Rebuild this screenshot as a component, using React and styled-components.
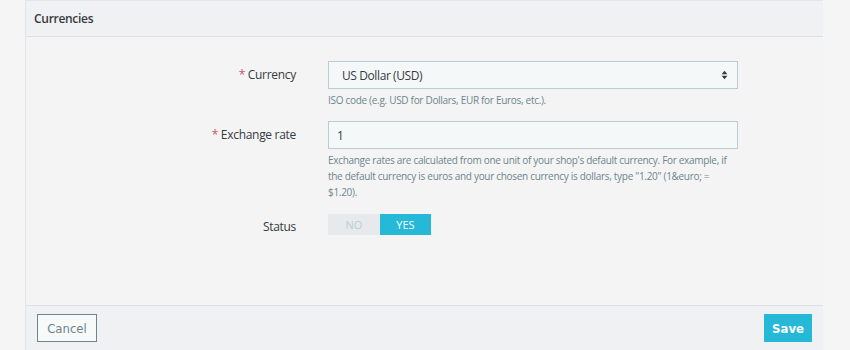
import React, { useState } from "react";
import styled, { createGlobalStyle } from "styled-components";

const GlobalStyle = createGlobalStyle`
    html, body {
        margin: 0;
        padding: 0;
        background: #f5f5f5;
        font-family: "Open Sans", "Liberation Sans", sans-serif;
        color: #363a41;
    }
    * {
        box-sizing: border-box;
    }
`;

function App() {
    const [currency, setCurrency] = useState("USD");
    const [rate, setRate] = useState("1");
    const [active, setActive] = useState(true);

    return (
        <>
            <GlobalStyle />
            <Page>
                <Panel>
                    <Header>Currencies</Header>
                    <Body>
                        <FormGroup>
                            <Label>
                                <Required>*</Required> Currency
                            </Label>
                            <Field>
                                <SelectBox>
                                    <Select
                                        value={currency}
                                        onChange={(e) => setCurrency(e.target.value)}
                                    >
                                        <option value="USD">US Dollar (USD)</option>
                                        <option value="EUR">Euro (EUR)</option>
                                    </Select>
                                    <Caret viewBox="0 0 8 12" aria-hidden="true">
                                        <path d="M4 1 L7.5 5 H0.5 Z" />
                                        <path d="M4 11 L7.5 7 H0.5 Z" />
                                    </Caret>
                                </SelectBox>
                                <Help>ISO code (e.g. USD for Dollars, EUR for Euros, etc.).</Help>
                            </Field>
                        </FormGroup>

                        <FormGroup>
                            <Label>
                                <Required>*</Required> Exchange rate
                            </Label>
                            <Field>
                                <Input
                                    type="text"
                                    value={rate}
                                    onChange={(e) => setRate(e.target.value)}
                                />
                                <Help>
                                    Exchange rates are calculated from one unit of your shop's
                                    default currency. For example, if the default currency is
                                    euros and your chosen currency is dollars, type "1.20"
                                    (1&amp;euro; = $1.20).
                                </Help>
                            </Field>
                        </FormGroup>

                        <FormGroup>
                            <Label>Status</Label>
                            <Field>
                                <Switch>
                                    <SwitchOption
                                        type="button"
                                        $on={!active}
                                        onClick={() => setActive(false)}
                                    >
                                        NO
                                    </SwitchOption>
                                    <SwitchOption
                                        type="button"
                                        $on={active}
                                        onClick={() => setActive(true)}
                                    >
                                        YES
                                    </SwitchOption>
                                </Switch>
                            </Field>
                        </FormGroup>
                    </Body>
                    <Footer>
                        <CancelButton type="button">Cancel</CancelButton>
                        <SaveButton type="button">Save</SaveButton>
                    </Footer>
                </Panel>
            </Page>
        </>
    );
}

const Page = styled.div`
    width: 850px;
    height: 350px;
    padding: 0 27px 0 25px;
    background: #f5f5f5;
    overflow: hidden;
`;
const Panel = styled.div`
    display: flex;
    flex-direction: column;
    height: 100%;
    background: #f4f4f4;
    border-left: 1px solid #e3e6e8;
    border-top: 1px solid #e3e6e8;
`;
const Header = styled.div`
    height: 36px;
    padding: 0 8px;
    display: flex;
    align-items: center;
    background: #eff1f2;
    border-bottom: 1px solid #dbe2e5;
    font-size: 12px;
    letter-spacing: -0.3px;
    font-weight: 600;
    color: #363a41;
`;
const Body = styled.div`
    flex: 1;
    padding-top: 24px;
`;
const FormGroup = styled.div`
    display: grid;
    grid-template-columns: 270px 410px;
    column-gap: 32px;
    margin-bottom: 13px;
`;
const Label = styled.label`
    text-align: right;
    font-size: 12px;
    letter-spacing: -0.3px;
    line-height: 28px;
    color: #363a41;
`;
const Required = styled.span`
    color: #c05c67;
`;
const Field = styled.div`
    display: flex;
    flex-direction: column;
    align-items: flex-start;
`;
const SelectBox = styled.div`
    position: relative;
    width: 100%;
`;
const Select = styled.select`
    width: 100%;
    height: 28px;
    padding: 0 30px 0 13px;
    font-family: inherit;
    font-size: 12px;
    letter-spacing: -0.4px;
    color: #363a41;
    background: #f5f8f9;
    border: 1px solid #bbcdd2;
    border-radius: 0;
    appearance: none;
    outline: none;
`;
const Caret = styled.svg`
    position: absolute;
    right: 10px;
    top: 9px;
    width: 7px;
    height: 10px;
    fill: #363a41;
    pointer-events: none;
`;
const Input = styled.input`
    width: 100%;
    height: 28px;
    padding: 0 8px;
    font-family: inherit;
    font-size: 12px;
    color: #363a41;
    background: #f5f8f9;
    border: 1px solid #bbcdd2;
    border-radius: 0;
    outline: none;
`;
const Help = styled.p`
    margin: 3px 0 0;
    font-size: 10px;
    letter-spacing: -0.3px;
    line-height: 16px;
    color: #6c868e;
`;
const Switch = styled.div`
    display: flex;
    height: 21px;
    margin-top: 1px;
`;
const SwitchOption = styled.button`
    width: 52px;
    height: 21px;
    padding: 0;
    border: 0;
    font-family: inherit;
    font-size: 11px;
    cursor: pointer;
    background: ${(p) => (p.$on ? "#25b9d7" : "#e7eaec")};
    color: ${(p) => (p.$on ? "#fff" : "#bbcdd2")};
    & + & {
        width: 51px;
    }
`;
const Footer = styled.div`
    display: flex;
    justify-content: space-between;
    height: 45px;
    padding: 8px 11px 0 11px;
    background: #eff1f2;
    border-top: 1px solid #dbe2e5;
    & > button {
        height: 28px;
        font-family: "DejaVu Sans Condensed", "Liberation Sans Narrow", sans-serif;
        font-stretch: condensed;
        font-size: 13px;
        cursor: pointer;
    }
`;
const CancelButton = styled.button`
    width: 60px;
    background: #f8f9f9;
    color: #6c868e;
    border: 1px solid #6c868e;
`;
const SaveButton = styled.button`
    width: 48px;
    background: #25b9d7;
    color: #fff;
    border: 0;
    font-weight: bold;
`;

export default App;
